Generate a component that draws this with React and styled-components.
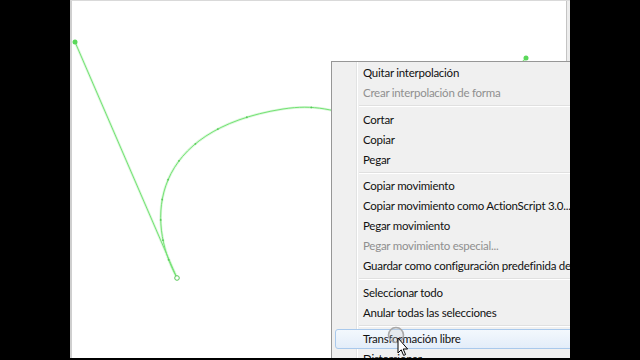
import React from "react";
import styled, { createGlobalStyle } from "styled-components";

const Global = createGlobalStyle`
  html, body { margin: 0; padding: 0; background: #000; }
  body { font-family: Lato, "Noto Sans", sans-serif; }
`;

const Frame = styled.div`
  width: 640px;
  height: 360px;
  background: #000;
  display: flex;
  overflow: hidden;
`;

const Letterbox = styled.div`
  flex: 0 0 ${(p) => p.$w}px;
  background: #000;
`;

const Screen = styled.div`
  position: relative;
  flex: 0 0 500px;
  height: 358px;
  overflow: hidden;
  background: #fff;
  box-sizing: border-box;
  border-left: 2px solid #cfcfcf;
  border-top: 1px solid #d9d9d9;
`;

const RightEdge = styled.div`
  position: absolute;
  top: 0;
  right: 0;
  width: 3px;
  height: 100%;
  background: #ececec;
  border-left: 1px solid #c4c4c4;
`;

const Drawing = styled.svg`
  position: absolute;
  left: -2px;
  top: -1px;
  width: 500px;
  height: 358px;
`;

const Menu = styled.div`
  position: absolute;
  left: 259px;
  top: 60px;
  width: 300px;
  background: #f0f0f0;
  border: 1px solid #979797;
  padding: 1px 2px 0 2px;
  font-family: Lato, "Noto Sans", sans-serif;
  font-size: 11.5px;
  letter-spacing: -0.25px;
  &::before {
    content: "";
    position: absolute;
    left: 24px;
    top: 0;
    bottom: 0;
    width: 1px;
    background: #e2e3e3;
  }
  &::after {
    content: "";
    position: absolute;
    left: 25px;
    top: 0;
    bottom: 0;
    width: 1px;
    background: #fff;
  }
`;

const Item = styled.div`
  position: relative;
  z-index: 1;
  height: 20px;
  line-height: 20px;
  box-sizing: border-box;
  padding-left: 28px;
  white-space: nowrap;
  color: ${(p) => (p.$disabled ? "#8f8f8f" : "#111")};
  border: 1px solid ${(p) => (p.$active ? "#a9c9ec" : "transparent")};
  border-radius: 3px;
  margin-left: 1px;
  background: ${(p) =>
    p.$active ? "linear-gradient(#f3f8fd, #e3edf9)" : "transparent"};
  & > span {
    position: relative;
    left: -1px;
    top: -1px;
  }
`;

const Separator = styled.div`
  position: relative;
  z-index: 1;
  height: 6.5px;
  margin-left: 25px;
  display: flex;
  flex-direction: column;
  justify-content: center;
  &::before {
    content: "";
    display: block;
    height: 1px;
    background: #e0e0e0;
  }
  &::after {
    content: "";
    display: block;
    height: 1px;
    background: #fff;
  }
`;

const CursorLayer = styled.svg`
  position: absolute;
  left: 314px;
  top: 324px;
  width: 24px;
  height: 34px;
  z-index: 3;
`;

const items = [
  { t: "Quitar interpolación" },
  { t: "Crear interpolación de forma", d: true },
  "sep",
  { t: "Cortar" },
  { t: "Copiar" },
  { t: "Pegar" },
  "sep",
  { t: "Copiar movimiento" },
  { t: "Copiar movimiento como ActionScript 3.0..." },
  { t: "Pegar movimiento" },
  { t: "Pegar movimiento especial...", d: true },
  { t: "Guardar como configuración predefinida de movimiento..." },
  "sep",
  { t: "Seleccionar todo" },
  { t: "Anular todas las selecciones" },
  "sep",
  { t: "Transformación libre", a: true },
  { t: "Distorsionar" },
];

function bez(p0, p1, p2, p3, t) {
  const u = 1 - t;
  return [
    u * u * u * p0[0] + 3 * u * u * t * p1[0] + 3 * u * t * t * p2[0] + t * t * t * p3[0],
    u * u * u * p0[1] + 3 * u * u * t * p1[1] + 3 * u * t * t * p2[1] + t * t * t * p3[1],
  ];
}

const seg1 = [[107, 278], [75, 220], [80, 130], [213, 109]];
const seg2 = [[213, 109], [245, 104], [262, 110], [300, 120]];
const dots = [];
for (let i = 1; i < 10; i++) dots.push(bez(...seg1, i / 10));
for (let i = 1; i < 3; i++) dots.push(bez(...seg2, i / 3));

const curveD =
  "M107,278 C75,220 80,130 213,109 C245,104 262,110 300,120 S430,90 456,58";

export default function App() {
  return (
    <>
      <Global />
      <Frame>
        <Letterbox $w={70} />
        <Screen>
          <Drawing viewBox="0 0 500 358">
            <g fill="none" strokeLinecap="round">
              <path d="M5,42 L107,278" stroke="#dcf8dc" strokeWidth="2.6" />
              <path d={curveD} stroke="#dcf8dc" strokeWidth="2.6" />
              <path d="M5,42 L107,278" stroke="#74e274" strokeWidth="1" />
              <path d={curveD} stroke="#74e274" strokeWidth="1" />
            </g>
            {dots.map(([x, y], i) => (
              <circle key={i} cx={x} cy={y} r="0.9" fill="#58c858" />
            ))}
            <circle cx="5" cy="42" r="2.5" fill="#5ad85a" />
            <circle cx="456" cy="58" r="2.5" fill="#5ad85a" />
            <circle cx="107" cy="278" r="2.3" fill="#fff" stroke="#5ac85a" strokeWidth="1" />
          </Drawing>
          <RightEdge />
          <Menu>
            {items.map((it, i) =>
              it === "sep" ? (
                <Separator key={i} />
              ) : (
                <Item key={i} $disabled={it.d} $active={it.a}>
                  <span>{it.t}</span>
                </Item>
              )
            )}
          </Menu>
          <CursorLayer viewBox="0 0 24 34">
            <circle cx="10" cy="10" r="7.5" fill="rgba(200,200,200,0.25)" stroke="#a8a8a8" strokeWidth="1.6" />
            <path
              d="M12,13 L12,28 L15.2,24.8 L17.6,30.4 L19.6,29.6 L17.2,24 L21.6,24 Z"
              fill="#fff"
              stroke="#000"
              strokeWidth="1"
              strokeLinejoin="round"
            />
          </CursorLayer>
        </Screen>
        <Letterbox $w={70} />
      </Frame>
    </>
  );
}
